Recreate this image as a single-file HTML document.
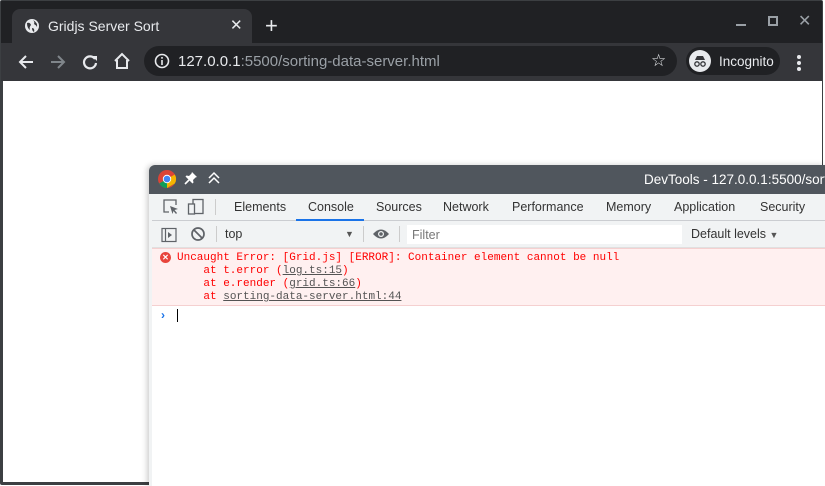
<!DOCTYPE html>
<html><head><meta charset="utf-8"><style>
*{margin:0;padding:0;box-sizing:border-box}
html,body{width:825px;height:486px;overflow:hidden}
body{background:#fff;font-family:"Liberation Sans",sans-serif;position:relative}
.abs{position:absolute}
.mono{font-family:"Liberation Mono",monospace}
</style></head><body>
<div class="abs" style="left:0;top:0;width:823px;height:485px;background:#3c3f42;border-radius:2px"></div>
<div class="abs" style="left:1px;top:1px;width:821px;height:42px;background:#202124"></div>
<div class="abs" style="left:12px;top:9px;width:240px;height:34px;background:#35363a;border-radius:8px 8px 0 0"></div>
<svg class="abs" style="left:24px;top:18px" width="16" height="16" viewBox="0 0 16 16"><circle cx="8" cy="8" r="7" fill="#e8eaed"/><path d="M3 5 Q6 4 7 7 Q5 9 6 12 Q3 10 3 5Z M9 2 Q11 4 10 6 Q12 7 13 9 Q14 5 9 2Z M8 10 Q11 10 10 14 Q8 13 8 10Z" fill="#35363a"/></svg>
<div class="abs" style="left:48px;top:18px;color:#e8eaed;font-size:14px">Gridjs Server Sort</div>
<div class="abs" style="left:230px;top:16px;color:#e8eaed;font-size:15px">✕</div>
<div class="abs" style="left:265px;top:13px;color:#e8eaed;font-size:22px;font-weight:300">+</div>
<div class="abs" style="left:736px;top:24px;width:10px;height:2px;background:#9aa0a6"></div>
<div class="abs" style="left:768px;top:16px;width:10px;height:10px;border:2px solid #9aa0a6"></div>
<div class="abs" style="left:798px;top:11px;color:#9aa0a6;font-size:16px">✕</div>
<div class="abs" style="left:1px;top:43px;width:821px;height:38px;background:#35363a"></div>
<svg class="abs" style="left:16px;top:52px" width="20" height="20" viewBox="0 0 20 20"><path d="M17 10H4M10 4L4 10L10 16" stroke="#e8eaed" stroke-width="2" fill="none"/></svg>
<svg class="abs" style="left:48px;top:52px" width="20" height="20" viewBox="0 0 20 20"><path d="M3 10H16M10 4L16 10L10 16" stroke="#80868b" stroke-width="2" fill="none"/></svg>
<svg class="abs" style="left:80px;top:52px" width="20" height="20" viewBox="0 0 20 20"><path d="M15 7A6 6 0 1 0 16 11" stroke="#e8eaed" stroke-width="2.2" fill="none"/><path d="M12 4H17V9Z" fill="#e8eaed"/></svg>
<svg class="abs" style="left:112px;top:51px" width="20" height="20" viewBox="0 0 20 20"><path d="M3 10L10 3L17 10M5 9V17H15V9" stroke="#e8eaed" stroke-width="2" fill="none"/></svg>
<div class="abs" style="left:144px;top:46px;width:533px;height:30px;background:#202124;border-radius:15px"></div>
<svg class="abs" style="left:154px;top:53px" width="16" height="16" viewBox="0 0 16 16"><circle cx="8" cy="8" r="6.5" stroke="#e8eaed" stroke-width="1.6" fill="none"/><rect x="7.2" y="7" width="1.6" height="5" fill="#e8eaed"/><rect x="7.2" y="4" width="1.6" height="1.7" fill="#e8eaed"/></svg>
<div class="abs" style="left:178px;top:53px;font-size:15px;color:#9aa0a6"><span style="color:#e8eaed">127.0.0.1</span>:5500/sorting-data-server.html</div>
<div class="abs" style="left:651px;top:51px;color:#e8eaed;font-size:17px">☆</div>
<div class="abs" style="left:686px;top:47px;width:94px;height:28px;background:#202124;border-radius:14px"></div>
<div class="abs" style="left:689px;top:50px;width:22px;height:22px;background:#e8eaed;border-radius:50%"></div>
<svg class="abs" style="left:692px;top:53px" width="16" height="16" viewBox="0 0 16 16"><path d="M3 7H13L11 3H5Z" fill="#35363a"/><circle cx="5" cy="11" r="2.2" stroke="#35363a" fill="none" stroke-width="1.3"/><circle cx="11" cy="11" r="2.2" stroke="#35363a" fill="none" stroke-width="1.3"/></svg>
<div class="abs" style="left:719px;top:54px;color:#e8eaed;font-size:13.5px">Incognito</div>
<div class="abs" style="left:797px;top:55px;width:4px;height:4px;background:#e8eaed;border-radius:50%;box-shadow:0 6px 0 #e8eaed,0 12px 0 #e8eaed"></div>
<div class="abs" style="left:3px;top:81px;width:819px;height:401px;background:#fff"></div>
<!-- devtools -->
<div class="abs" style="left:149px;top:165px;width:676px;height:321px;background:#fff;border-left:3px solid #f1f3f4;border-radius:6px 0 0 0;box-shadow:-2px 0 6px rgba(0,0,0,.2)"></div>
<div class="abs" style="left:149px;top:165px;width:676px;height:29px;background:#50565d;border-radius:6px 0 0 0"></div>
<svg class="abs" style="left:157px;top:169px" width="20" height="20" viewBox="0 0 20 20"><circle cx="10" cy="10" r="9" fill="#db4437"/><path d="M10 10L2.2 14.5A9 9 0 0 0 10 19L17.8 14.5Z" fill="#0f9d58"/><path d="M10 10L17.8 5.5A9 9 0 0 1 17.8 14.5L10 19Z" fill="#f4b400"/><circle cx="10" cy="10" r="4.2" fill="#fff"/><circle cx="10" cy="10" r="3.3" fill="#4285f4"/></svg>
<svg class="abs" style="left:184px;top:171px" width="14" height="14" viewBox="0 0 14 14"><path d="M8 1L13 6L11.5 6.5L9 9L9.5 11.5L8.5 12.5L1.5 5.5L2.5 4.5L5 5L7.5 2.5Z" fill="#fff"/><path d="M5 9L1 13" stroke="#fff" stroke-width="1.6"/></svg>
<svg class="abs" style="left:207px;top:171px" width="14" height="14" viewBox="0 0 14 14"><path d="M2 7L7 2L12 7M2 12L7 7L12 12" stroke="#fff" stroke-width="1.5" fill="none"/></svg>
<div class="abs" style="left:644px;top:172px;color:#fff;font-size:13.5px;white-space:nowrap">DevTools - 127.0.0.1:5500/sorting</div>
<div class="abs" style="left:152px;top:194px;width:673px;height:27px;background:#f1f3f4;border-bottom:1px solid #cbcdd1"></div>
<svg class="abs" style="left:162px;top:198px" width="18" height="18" viewBox="0 0 18 18"><path d="M7 14H2V2H14V7" stroke="#5f6368" stroke-width="1.3" fill="none"/><path d="M8 8L16 11L12.5 12L15 15L14 16L11.5 13L10.5 16Z" fill="#5f6368"/></svg>
<svg class="abs" style="left:187px;top:198px" width="18" height="18" viewBox="0 0 18 18"><rect x="6" y="1.5" width="10" height="14" stroke="#5f6368" fill="none" stroke-width="1.3"/><rect x="1.5" y="6" width="6" height="10" stroke="#5f6368" fill="#f1f3f4" stroke-width="1.3"/></svg>
<div class="abs" style="left:215px;top:199px;width:1px;height:16px;background:#ccc"></div>
<div class="abs" style="top:200px;left:234px;font-size:12.5px;color:#333;white-space:nowrap">Elements</div>
<div class="abs" style="top:200px;left:308px;font-size:12.5px;color:#333">Console</div>
<div class="abs" style="left:296px;top:219px;width:68px;height:2px;background:#1a73e8"></div>
<div class="abs" style="top:200px;left:376px;font-size:12.5px;color:#333">Sources</div>
<div class="abs" style="top:200px;left:443px;font-size:12.5px;color:#333">Network</div>
<div class="abs" style="top:200px;left:512px;font-size:12.5px;color:#333">Performance</div>
<div class="abs" style="top:200px;left:606px;font-size:12.5px;color:#333">Memory</div>
<div class="abs" style="top:200px;left:674px;font-size:12.5px;color:#333">Application</div>
<div class="abs" style="top:200px;left:760px;font-size:12.5px;color:#333">Security</div>
<div class="abs" style="left:152px;top:221px;width:673px;height:27px;background:#f1f3f4;border-bottom:1px solid #e0e0e0"></div>
<svg class="abs" style="left:161px;top:227px" width="16" height="16" viewBox="0 0 16 16"><rect x="1" y="1.5" width="14" height="13" stroke="#5f6368" fill="none" stroke-width="1.2"/><line x1="4.5" y1="2" x2="4.5" y2="14" stroke="#5f6368" stroke-width="1.2"/><path d="M7 5L11 8L7 11Z" fill="#5f6368"/></svg>
<svg class="abs" style="left:190px;top:226px" width="16" height="16" viewBox="0 0 16 16"><circle cx="8" cy="8" r="6" stroke="#5f6368" stroke-width="1.7" fill="none"/><line x1="4" y1="4" x2="12" y2="12" stroke="#5f6368" stroke-width="1.7"/></svg>
<div class="abs" style="left:216px;top:226px;width:1px;height:16px;background:#ccc"></div>
<div class="abs" style="left:225px;top:227px;font-size:12.5px;color:#333">top</div>
<div class="abs" style="left:345px;top:229px;font-size:9px;color:#555">▼</div>
<div class="abs" style="left:363px;top:226px;width:1px;height:16px;background:#ccc"></div>
<svg class="abs" style="left:372px;top:227px" width="18" height="14" viewBox="0 0 18 14"><path d="M1 7Q9 -2 17 7Q9 16 1 7Z" fill="#5f6368"/><circle cx="9" cy="7" r="3" fill="#f1f3f4"/><circle cx="9" cy="7" r="1.8" fill="#5f6368"/></svg>
<div class="abs" style="left:399px;top:226px;width:1px;height:16px;background:#ccc"></div>
<div class="abs" style="left:407px;top:225px;width:275px;height:19px;background:#fff"></div>
<div class="abs" style="left:412px;top:228px;font-size:12.5px;color:#777">Filter</div>
<div class="abs" style="left:691px;top:227px;font-size:12.5px;color:#333;white-space:nowrap">Default levels <span style="font-size:9px;color:#555">▼</span></div>
<div class="abs" style="left:152px;top:248px;width:673px;height:58px;background:#fff0f0;border-top:1px solid #f5d0d0;border-bottom:1px solid #f5d0d0"></div>
<div class="abs" style="left:160px;top:252px;width:11px;height:11px;border-radius:50%;background:#e8453c;color:#fff;font-size:8px;line-height:11px;text-align:center;font-weight:bold">✕</div>
<div class="abs mono" style="left:177px;top:252px;font-size:11px;line-height:13px;color:#f00;white-space:pre">Uncaught Error: [Grid.js] [ERROR]: Container element cannot be null
    at t.error (<span style="color:#545454;text-decoration:underline">log.ts:15</span>)
    at e.render (<span style="color:#545454;text-decoration:underline">grid.ts:66</span>)
    at <span style="color:#545454;text-decoration:underline">sorting-data-server.html:44</span></div>
<div class="abs" style="left:161px;top:308px;color:#1a73e8;font-size:12px;font-weight:bold">›</div>
<div class="abs" style="left:177px;top:309px;width:1px;height:13px;background:#000"></div>
</body></html>
